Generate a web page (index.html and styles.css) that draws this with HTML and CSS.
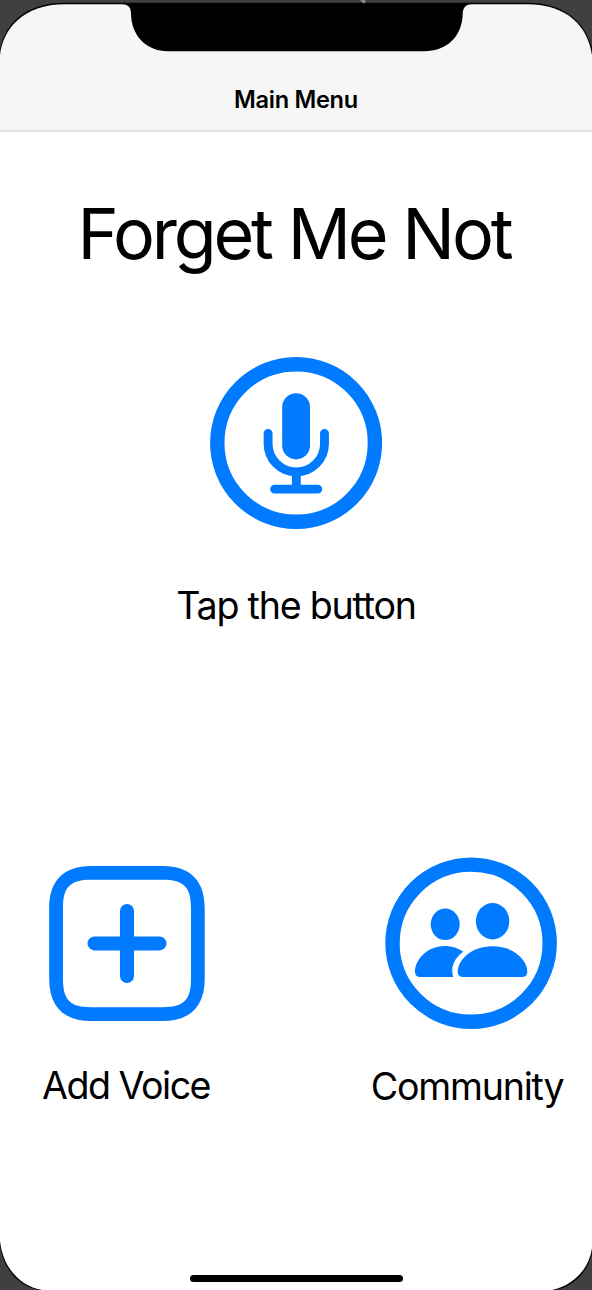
FILE: index.html
```html
<!DOCTYPE html>
<html lang="en">
<head>
<meta charset="utf-8">
<title>Main Menu</title>
<link rel="stylesheet" href="styles.css">
</head>
<body>
<div class="phone">
  <header class="navbar"><span class="navbar-title">Main Menu</span></header>
  <main class="content">
    <h1 class="title">Forget Me Not</h1>
    <button class="action record" aria-label="Record">
      <svg class="icon" width="172" height="172" viewBox="210 357 172 172">
        <circle class="line" cx="296.1" cy="443" r="78.8" stroke-width="14.4"/>
        <rect x="282.2" y="393.2" width="27.8" height="66.2" rx="13.9"/>
        <path class="line" stroke-width="8.9" d="M268.1 433.5V443.7a28.2 28.2 0 0 0 56.4 0V433.5M296.3 472V489M274.6 489.1H317.8"/>
      </svg>
    </button>
    <p class="label hint">Tap the button</p>
    <div class="actions">
      <button class="action add">
        <svg class="icon" width="156" height="156" viewBox="49 866 156 156">
          <path fill-rule="evenodd" d="M49.2 908C49.2 880.5 63.7 866 91.2 866H162.7C190.2 866 204.7 880.5 204.7 908V979C204.7 1006.5 190.2 1021 162.7 1021H91.2C63.7 1021 49.2 1006.5 49.2 979ZM63 908V979C63 1000 70.2 1007.2 91.2 1007.2H162.7C183.7 1007.2 191 1000 191 979V908C191 887 183.7 879.8 162.7 879.8H91.2C70.2 879.8 63 887 63 908Z"/>
          <path class="line" stroke-width="14" d="M94.5 943.4H159.5M127 911V976"/>
        </svg>
        <span class="label">Add Voice</span>
      </button>
      <button class="action community">
        <svg class="icon" width="172" height="172" viewBox="385 857 172 172">
          <circle class="line" cx="471.1" cy="943.2" r="78.6" stroke-width="14.4"/>
          <ellipse cx="445.2" cy="924.3" rx="14.5" ry="15.8"/>
          <ellipse cx="492.6" cy="921.2" rx="16.7" ry="18.2"/>
          <path d="M463.5 977Q457.7 977 457.7 971.5C457.7 961 470 946.2 492.5 946.2S527.3 961 527.3 971.5Q527.3 977 521.5 977Z"/>
          <path d="M420.5 977Q415 977 415 971.5C415 961 426 946 445 946C452 946 458.5 948.3 463.3 951.8C455 957.5 450 967 453.2 977Z"/>
        </svg>
        <span class="label">Community</span>
      </button>
    </div>
  </main>
  <div class="home-bar"></div>
  <svg class="bezel" width="592" height="1290" viewBox="0 0 592 1290">
    <g class="bezel-edge">
      <path d="M-3 1H595V55H592C588 27 568 4.2 527 4.2H472Q463 4.2 462.7 13C462.7 36 447 51.3 424 51.3H168C147 51.3 131 36 131 13Q131 4.2 122 4.2H65C23 4.2 3 29 0 55H-3Z"/>
      <path d="M0 1241C3 1268 20 1286 42 1290H0ZM592 1248C589 1269 574 1285 552 1290H592Z"/>
    </g>
    <g class="bezel-case">
      <path d="M0 0H592V48C586 25 567 2.8 527 2.8H65C24 2.8 4 26 0 50Z"/>
      <path d="M0 1247C4 1270 19 1286 38 1290H0ZM592 1253C588 1272 574 1286 556 1290H592Z"/>
    </g>
    <path class="scratch" d="M361.5 -0.5L365 2.5"/>
  </svg>
</div>
</body>
</html>
```
FILE: styles.css
```css
* { box-sizing: border-box; }
body { margin: 0; background: #404040; }
.phone {
  position: relative;
  display: flex;
  flex-direction: column;
  width: 592px;
  height: 1290px;
  overflow: hidden;
  background: #fff;
  color: #000;
  font-family: Inter, "Liberation Sans", sans-serif;
}
.navbar {
  height: 132px;
  padding-top: 84.5px;
  background: #f6f6f6;
  border-bottom: 2px solid #e0e0e0;
  text-align: center;
}
.navbar-title {
  display: block;
  font-size: 23.6px;
  line-height: 30px;
  font-weight: 600;
  letter-spacing: -0.3px;
}
.content {
  flex: 1;
  display: flex;
  flex-direction: column;
  align-items: center;
}
.title {
  margin: 59px 0 0;
  padding-right: 4px;
  font-size: 70px;
  line-height: 86px;
  font-weight: 400;
  letter-spacing: -3.2px;
  word-spacing: 0.5px;
  white-space: nowrap;
}
.action {
  display: flex;
  flex-direction: column;
  align-items: center;
  padding: 0;
  border: 0;
  background: none;
  color: inherit;
  font: inherit;
}
.icon { display: block; fill: #007aff; }
.line { fill: none; stroke: #007aff; stroke-linecap: round; }
.record { margin-top: 80px; }
.label {
  margin: 0;
  font-size: 37.6px;
  line-height: 46px;
  letter-spacing: -1.2px;
  white-space: nowrap;
}
.hint { margin-top: 54px; }
.actions {
  display: flex;
  justify-content: space-between;
  align-items: flex-start;
  width: 100%;
  margin-top: 228px;
  padding: 0 28px 0 42px;
}
.add { width: 170px; padding-top: 9px; gap: 41px; }
.add .label { margin-right: 2px; letter-spacing: -1.5px; }
.community { width: 194px; margin-right: -4px; gap: 35px; }
.community .label { margin-right: 8px; letter-spacing: -1.2px; }
.home-bar {
  align-self: center;
  width: 213px;
  height: 7px;
  margin-bottom: 8px;
  border-radius: 4px;
  background: #000;
}
.bezel { position: absolute; top: 0; left: 0; pointer-events: none; }
.bezel-edge { fill: #000; }
.bezel-case { fill: #404040; }
.scratch { stroke: #8a8a8a; stroke-width: 3; }
```
